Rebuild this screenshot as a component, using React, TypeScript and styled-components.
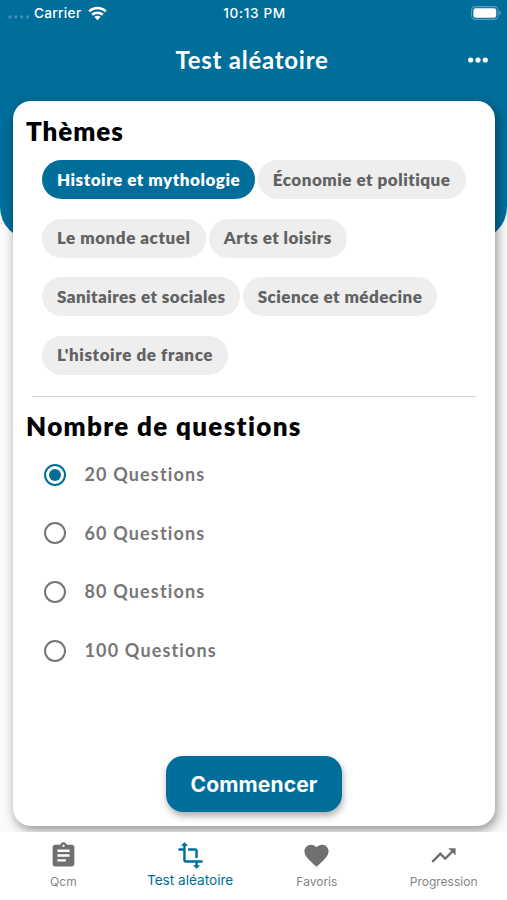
import React, { useState } from "react";
import styled, { createGlobalStyle } from "styled-components";
import { MdAssignment, MdFavorite, MdTransform, MdTrendingUp } from "react-icons/md";

const BLUE = "#006e9a";

const GlobalStyle = createGlobalStyle`
  * { box-sizing: border-box; }
  body { margin: 0; background: #fafafa; font-family: Lato, "Open Sans", sans-serif; }
  button { font: inherit; border: 0; padding: 0; margin: 0; background: none; }
  h1, h2 { margin: 0; }
`;

const Screen = styled.div`
  height: 900px;
  display: flex;
  flex-direction: column;
  overflow: hidden;
`;

const Header = styled.header`
  height: 240px;
  flex: none;
  background: ${BLUE};
  border-radius: 0 0 33px 33px;
  color: #fff;
`;

const StatusBar = styled.div`
  height: 26px;
  display: grid;
  grid-template-columns: 1fr auto 1fr;
  align-items: center;
  padding: 0 6px 0 8px;
  font: 500 13.6px Inter, sans-serif;
`;

const Network = styled.div`
  display: flex;
  align-items: center;
`;

const SignalIcon = styled.svg`
  width: 22px;
  height: 4px;
  margin: 8px 4px 0 0;
`;

const Carrier = styled.span`
  letter-spacing: 0.32px;
`;

const WifiIcon = styled.svg`
  width: 19px;
  height: 15px;
  margin-left: 6.5px;
`;

const Clock = styled.span`
  letter-spacing: 0.65px;
`;

const BatteryIcon = styled.svg`
  width: 30px;
  height: 14px;
  justify-self: end;
`;

const TitleBar = styled.div`
  height: 67px;
  display: grid;
  grid-template-columns: 1fr auto 1fr;
  align-items: center;
  padding: 0 19px 0 16px;
`;

const Title = styled.h1`
  grid-column: 2;
  font-size: 24px;
  font-weight: 700;
  line-height: 30px;
  letter-spacing: 0.75px;
`;

const MoreButton = styled.button`
  justify-self: end;
  display: flex;
`;

const MoreIcon = styled.svg`
  width: 20px;
  height: 6px;
`;

const Card = styled.main`
  flex: none;
  height: 724.5px;
  margin: -139px 12.5px 0 13px;
  padding: 13px 0 0;
  display: flex;
  flex-direction: column;
  background: #fff;
  border-radius: 18px;
  box-shadow: 2px 4px 11px rgba(0, 0, 0, 0.42);
`;

const SectionTitle = styled.h2<{ $spacing: number }>`
  padding-left: 13px;
  font-size: 26px;
  font-weight: 800;
  line-height: 34px;
  letter-spacing: ${(p) => p.$spacing}px;
  color: #000;
`;

const ChipRows = styled.div`
  display: flex;
  flex-direction: column;
  gap: 19.6px;
  margin: 12px 0 0 29.3px;
`;

const ChipRow = styled.div`
  display: flex;
  gap: 3.3px;
`;

const Chip = styled.button<{ $width: number; $spacing: number; $selected: boolean }>`
  width: ${(p) => p.$width}px;
  height: 39px;
  padding-left: 14.6px;
  border-radius: 20px;
  text-align: left;
  white-space: nowrap;
  font-size: 17px;
  font-weight: 800;
  line-height: 38px;
  letter-spacing: ${(p) => p.$spacing}px;
  background: ${(p) => (p.$selected ? BLUE : "#eeeeee")};
  color: ${(p) => (p.$selected ? "#fff" : "#626262")};
`;

const Divider = styled.div`
  height: 1px;
  margin: 21.2px 18.5px 12px 18.5px;
  background: #cfcfcf;
`;

const Options = styled.div`
  display: flex;
  flex-direction: column;
  gap: 34.6px;
  margin: 19.8px 0 0 30.5px;
`;

const Option = styled.button`
  height: 24px;
  display: flex;
  align-items: center;
  gap: 19px;
  font-size: 18px;
  font-weight: 700;
  line-height: 20px;
  letter-spacing: 1.15px;
  color: #777;
`;

const OptionLabel = styled.span`
  padding-bottom: 1px;
`;

const Radio = styled.span<{ $checked: boolean }>`
  width: 22px;
  height: 22px;
  display: grid;
  place-items: center;
  border: 2.3px solid ${(p) => (p.$checked ? BLUE : "#757575")};
  border-radius: 50%;

  &::after {
    content: "";
    width: 12px;
    height: 12px;
    border-radius: 50%;
    background: ${(p) => (p.$checked ? BLUE : "transparent")};
  }
`;

const StartButton = styled.button`
  width: 176px;
  height: 56px;
  margin: auto 0 13.5px 153px;
  border-radius: 17px;
  background: ${BLUE};
  color: #fff;
  font: 700 21px Inter, sans-serif;
  letter-spacing: 0.15px;
  box-shadow: 1px 4px 7px rgba(0, 0, 0, 0.32);
`;

const TabBar = styled.nav`
  position: relative;
  height: 68px;
  flex: none;
  margin-top: auto;
  display: grid;
  grid-template-columns: repeat(4, 1fr);
  background: #fff;
`;

const Tab = styled.button<{ $active: boolean }>`
  display: flex;
  flex-direction: column;
  align-items: center;
  padding-top: 9px;
  color: ${(p) => (p.$active ? BLUE : "#707070")};

  svg {
    width: 29px;
    height: 29px;
  }
`;

const TabLabel = styled.span<{ $active: boolean }>`
  margin-top: ${(p) => (p.$active ? 1 : 2.5)}px;
  font: 400 ${(p) => (p.$active ? 13.6 : 12)}px/18px Inter, sans-serif;
  color: ${(p) => (p.$active ? BLUE : "#858585")};
`;

const THEMES = [
  [
    { label: "Histoire et mythologie", width: 212.5, spacing: 0.54 },
    { label: "Économie et politique", width: 207.5, spacing: 0.52 },
  ],
  [
    { label: "Le monde actuel", width: 163.5, spacing: 0.53 },
    { label: "Arts et loisirs", width: 138, spacing: 0.47 },
  ],
  [
    { label: "Sanitaires et sociales", width: 197.5, spacing: 0.44 },
    { label: "Science et médecine", width: 194, spacing: 0.45 },
  ],
  [{ label: "L'histoire de france", width: 186, spacing: 0.6 }],
];

const COUNTS = [20, 60, 80, 100];

const TABS = [
  { label: "Qcm", Icon: MdAssignment },
  { label: "Test aléatoire", Icon: MdTransform },
  { label: "Favoris", Icon: MdFavorite },
  { label: "Progression", Icon: MdTrendingUp },
];

export default function App() {
  const [theme, setTheme] = useState("Histoire et mythologie");
  const [count, setCount] = useState(20);
  const [tab, setTab] = useState("Test aléatoire");

  return (
    <Screen>
      <GlobalStyle />
      <Header>
        <StatusBar>
          <Network>
            <SignalIcon viewBox="0 0 22 4" fill="#3d8fb2">
              {[2, 7.8, 13.7, 19.5].map((cx) => (
                <circle key={cx} cx={cx} cy="2" r="1.7" />
              ))}
            </SignalIcon>
            <Carrier>Carrier</Carrier>
            <WifiIcon viewBox="0 0 19 15" fill="none" stroke="#fff" strokeWidth="2.6">
              <path d="M1.2 5.4a12 12 0 0 1 16.6 0" />
              <path d="M4.2 8.8a7.7 7.7 0 0 1 10.6 0" />
              <path d="M9.5 14.2 6.4 11.1a4.4 4.4 0 0 1 6.2 0z" fill="#fff" stroke="none" />
            </WifiIcon>
          </Network>
          <Clock>10:13 PM</Clock>
          <BatteryIcon viewBox="0 0 30 14">
            <rect x="0.6" y="0.6" width="26.4" height="12.8" rx="3.8" fill="none" stroke="#5da1be" strokeWidth="1.1" />
            <rect x="2.4" y="2.3" width="22.8" height="9.4" rx="2.2" fill="#fff" />
            <path d="M28.3 4.8q1.5.8 1.5 2.2t-1.5 2.2z" fill="#6aa9c4" />
          </BatteryIcon>
        </StatusBar>
        <TitleBar>
          <Title>Test aléatoire</Title>
          <MoreButton aria-label="Plus d'options">
            <MoreIcon viewBox="0 0 20 6" fill="#fff">
              <circle cx="2.7" cy="3" r="2.6" />
              <circle cx="10" cy="3" r="2.6" />
              <circle cx="17.3" cy="3" r="2.6" />
            </MoreIcon>
          </MoreButton>
        </TitleBar>
      </Header>

      <Card>
        <SectionTitle $spacing={0.95}>Thèmes</SectionTitle>
        <ChipRows>
          {THEMES.map((row, index) => (
            <ChipRow key={index}>
              {row.map((chip) => (
                <Chip
                  key={chip.label}
                  $width={chip.width}
                  $spacing={chip.spacing}
                  $selected={chip.label === theme}
                  onClick={() => setTheme(chip.label)}
                >
                  {chip.label}
                </Chip>
              ))}
            </ChipRow>
          ))}
        </ChipRows>
        <Divider />
        <SectionTitle $spacing={1.33}>Nombre de questions</SectionTitle>
        <Options>
          {COUNTS.map((value) => (
            <Option key={value} onClick={() => setCount(value)}>
              <Radio $checked={value === count} />
              <OptionLabel>{value} Questions</OptionLabel>
            </Option>
          ))}
        </Options>
        <StartButton>Commencer</StartButton>
      </Card>

      <TabBar>
        {TABS.map(({ label, Icon }) => (
          <Tab key={label} $active={label === tab} onClick={() => setTab(label)}>
            <Icon />
            <TabLabel $active={label === tab}>{label}</TabLabel>
          </Tab>
        ))}
      </TabBar>
    </Screen>
  );
}
